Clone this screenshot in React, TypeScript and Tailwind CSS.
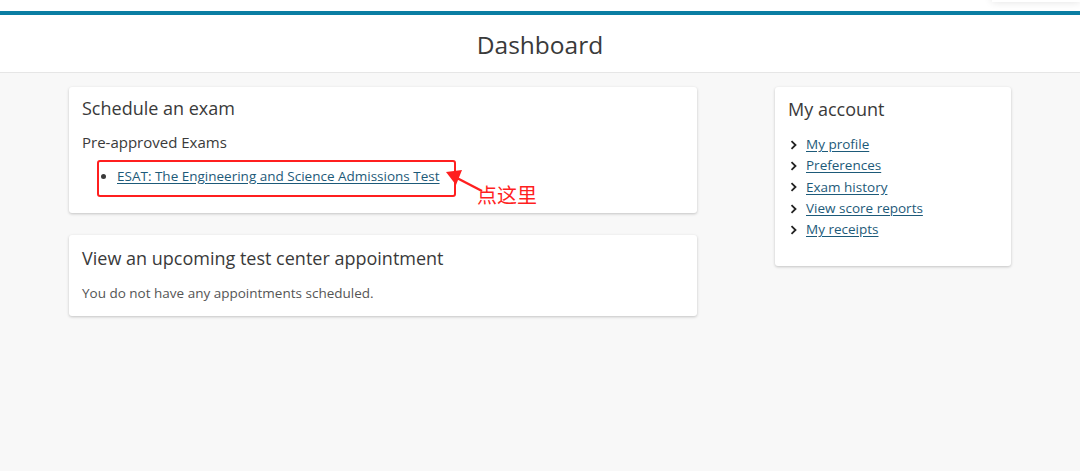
import type { ReactNode } from "react";

const accountLinks = ["My profile", "Preferences", "Exam history", "View score reports", "My receipts"];

function Card({ className = "", children }: { className?: string; children: ReactNode }) {
  return (
    <section className={`rounded-[3px] bg-white px-[13px] shadow-[0_1px_3px_rgba(0,0,0,0.22)] ${className}`}>
      {children}
    </section>
  );
}

function Chevron() {
  return (
    <svg width="8" height="10" viewBox="0 0 8 10" className="shrink-0">
      <path d="M1.5 1.2 L5.5 5 L1.5 8.8" fill="none" stroke="#222" strokeWidth="1.8" />
    </svg>
  );
}

export default function App() {
  return (
    <div className="relative min-h-screen bg-[#f8f8f8] font-['Open_Sans',sans-serif] text-[#3a3a3a]">
      <div className="relative h-[11px] overflow-hidden bg-white">
        <div className="absolute right-0 top-[-20px] h-[22px] w-[88px] bg-white shadow-[0_0_9px_rgba(0,0,0,0.12)]" />
      </div>
      <div className="h-[4px] bg-[#0a7ea3]" />
      <header className="flex h-[58px] items-center justify-center border-b border-[#e6e6e6] bg-white pt-[3px]">
        <h1 className="text-[24.5px] leading-none font-normal">Dashboard</h1>
      </header>

      <main className="flex justify-center gap-[78px] pt-[14px]">
        <div className="flex w-[628px] flex-col gap-[22px]">
          <Card className="h-[126px] pt-[8px]">
            <h2 className="text-[18px] leading-[27px]">Schedule an exam</h2>
            <p className="mt-[9px] text-[15px] leading-[22.5px]">Pre-approved Exams</p>
            <ul className="mt-[12px] list-disc pl-[35px] text-[13.5px] leading-[20px]">
              <li>
                <a href="#" className="text-[#1d5a79] underline underline-offset-2">
                  ESAT: The Engineering and Science Admissions Test
                </a>
              </li>
            </ul>
          </Card>
          <Card className="h-[81px] pt-[10px]">
            <h2 className="text-[18px] leading-[27px]">View an upcoming test center appointment</h2>
            <p className="mt-[11px] text-[13.5px] leading-[20px] text-[#555]">
              You do not have any appointments scheduled.
            </p>
          </Card>
        </div>

        <Card className="h-[179px] w-[236px] pt-[9px]">
          <h2 className="text-[18px] leading-[27px]">My account</h2>
          <ul className="mt-[11px] pl-[2px] text-[13.5px] leading-[21.3px]">
            {accountLinks.map((label) => (
              <li key={label} className="flex items-center gap-[8px]">
                <Chevron />
                <a href="#" className="text-[#1d5a79] underline underline-offset-2">
                  {label}
                </a>
              </li>
            ))}
          </ul>
        </Card>
      </main>

      {/* red annotation */}
      <div className="pointer-events-none absolute left-[97px] top-[160px] h-[37px] w-[359px] rounded-[3px] border-2 border-[#ff1f1f]" />
      <svg className="pointer-events-none absolute left-0 top-0" width="1080" height="471">
        <line x1="455" y1="177" x2="482" y2="191" stroke="#ff1f1f" strokeWidth="2.5" />
        <polygon points="446,172 462,170 456,185" fill="#ff1f1f" />
      </svg>
      <span className="pointer-events-none absolute left-[477px] top-[181px] text-[20px] leading-[28px] text-[#ff1f1f] font-['Noto_Sans_CJK_SC',sans-serif]">
        点这里
      </span>
    </div>
  );
}
